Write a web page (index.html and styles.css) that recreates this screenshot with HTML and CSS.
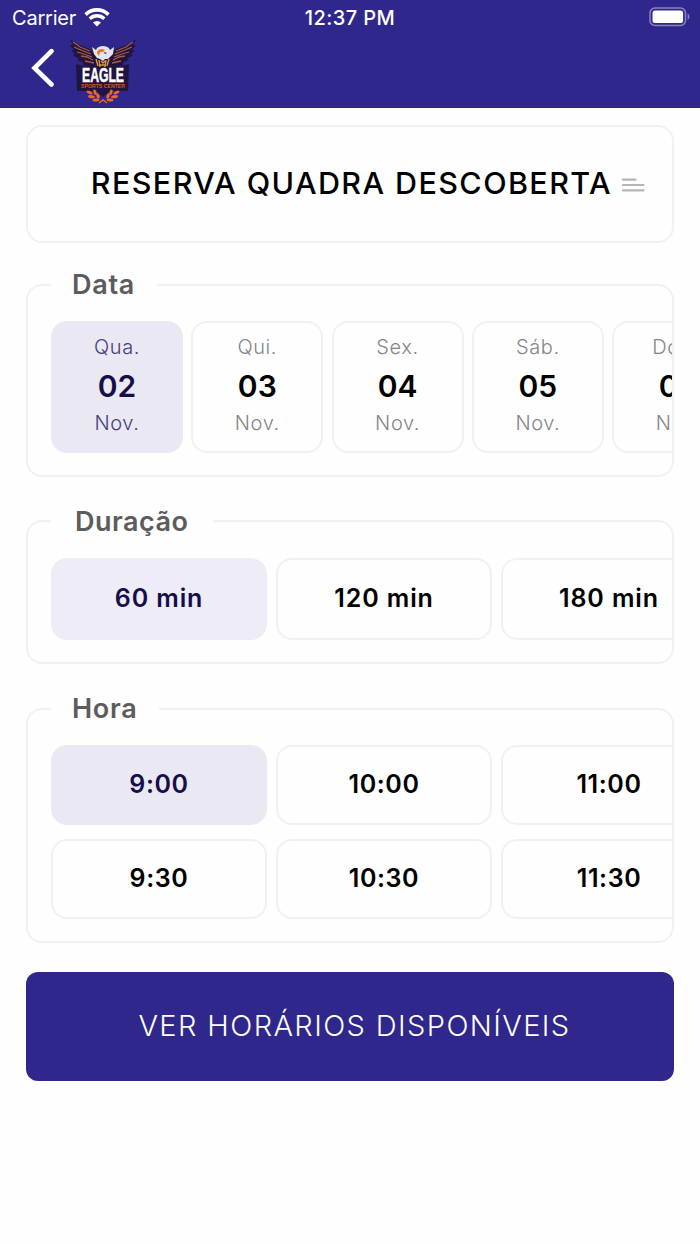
FILE: index.html
```html
<!DOCTYPE html>
<html lang="pt-BR">
<head>
  <meta charset="utf-8">
  <title>Reserva Quadra Descoberta</title>
  <link rel="stylesheet" href="styles.css">
</head>
<body>
  <header class="header">
    <div class="status-bar">
      <div class="status-left">
        <span class="carrier">Carrier</span>
        <svg class="wifi" width="26" height="19" viewBox="0 0 26 19">
          <path d="M1.6 6.6a16.2 16.2 0 0 1 22.8 0" fill="none" stroke="#fff" stroke-width="3.6"/>
          <path d="M5.7 10.8a10.4 10.4 0 0 1 14.6 0" fill="none" stroke="#fff" stroke-width="3.4"/>
          <path d="M13 18.6l-4-4.1a5.8 5.8 0 0 1 8 0z" fill="#fff"/>
        </svg>
      </div>
      <span class="clock">12:37 PM</span>
      <div class="status-right">
        <svg width="42" height="20" viewBox="0 0 42 20">
          <rect x="1" y="1" width="35.5" height="17.4" rx="5" fill="none" stroke="#8983be" stroke-width="1.5"/>
          <rect x="3.5" y="3.4" width="30.6" height="12.6" rx="2.5" fill="#fff"/>
          <path d="M38.6 6.6c2.4 1 2.4 5.3 0 6.3z" fill="#8983be"/>
        </svg>
      </div>
    </div>
    <div class="nav">
      <svg class="back" width="24" height="40" viewBox="0 0 24 40">
        <path d="M20.5 3.2L3.5 20l17 16.5" fill="none" stroke="#fff" stroke-width="4.6" stroke-linecap="round"/>
      </svg>
      <svg class="logo" width="70" height="68" viewBox="0 0 70 68">
        <!-- asas -->
        <path d="M2 1l7 5 13 5 6 6 3 12-9 1-8-4 2-1-7-3 2-1-6-4 2-1-4-4h3L2 7l3 0z" fill="#211440"/>
        <path d="M68 1l-7 5-13 5-6 6-3 12 9 1 8-4-2-1 7-3-2-1 6-4-2-1 4-4h-3l4-5-3 0z" fill="#211440"/>
        <g fill="none" stroke="#a85c3c" stroke-width="1.3">
          <path d="M5 4l7 5 10 4M6 9l7 3 10 4M9 14l7 2 8 3M13 18l6 1 6 3M17 23l9 2"/>
          <path d="M65 4l-7 5-10 4M64 9l-7 3-10 4M61 14l-7 2-8 3M57 18l-6 1-6 3M53 23l-9 2"/>
        </g>
        <!-- corpo -->
        <path d="M26 17l8 5 9-5-1 7-2 7H29l-2-7z" fill="#211440"/>
        <path d="M28 21l2 7M31 22l1 7M38 22l-1 7M41 21l-2 7M33 23l2 2 2-2M32 27h5" fill="none" stroke="#d99a43" stroke-width="1.4"/>
        <!-- cabeça -->
        <path d="M24 9l4 3c1-3 4-4 7-4s6 1 7 4l4-3-1 7-3 3-2 2-3 0-2 2-3-2-3-1-3-4z" fill="#e4e4ec"/>
        <path d="M29 15c0-4 5-5 8-3l-2 2-3 0-1 4z" fill="#ee7421"/>
        <path d="M36 14l3 1-2 1z" fill="#211440"/>
        <!-- faixa -->
        <path d="M8 26l12 3h29l12-3-1 27H42l-7 6-7-6H9z" fill="#211440"/>
        <text class="logo-name" x="14" y="44.3" textLength="42" lengthAdjust="spacingAndGlyphs">EAGLE</text>
        <text class="logo-sub" x="13" y="49.6" textLength="44" lengthAdjust="spacingAndGlyphs">SPORTS CENTER</text>
        <!-- louros -->
        <g fill="#ef6c1a">
          <ellipse cx="21.5" cy="54.5" rx="3.2" ry="1.5" transform="rotate(25 21.5 54.5)"/>
          <ellipse cx="27" cy="54.2" rx="2.8" ry="1.5" transform="rotate(70 27 54.2)"/>
          <ellipse cx="23.5" cy="58.7" rx="3.4" ry="1.5" transform="rotate(8 23.5 58.7)"/>
          <ellipse cx="30" cy="58" rx="2.8" ry="1.5" transform="rotate(65 30 58)"/>
          <ellipse cx="28" cy="62" rx="3.4" ry="1.5" transform="rotate(-5 28 62)"/>
          <ellipse cx="48.5" cy="54.5" rx="3.2" ry="1.5" transform="rotate(-25 48.5 54.5)"/>
          <ellipse cx="43" cy="54.2" rx="2.8" ry="1.5" transform="rotate(-70 43 54.2)"/>
          <ellipse cx="46.5" cy="58.7" rx="3.4" ry="1.5" transform="rotate(-8 46.5 58.7)"/>
          <ellipse cx="40" cy="58" rx="2.8" ry="1.5" transform="rotate(-65 40 58)"/>
          <ellipse cx="42" cy="62" rx="3.4" ry="1.5" transform="rotate(5 42 62)"/>
        </g>
        <path d="M31 65l4-3 4 3" fill="none" stroke="#ef6c1a" stroke-width="1.5"/>
      </svg>
    </div>
  </header>

  <main class="content">
    <div class="title-card">
      <h1 class="title">RESERVA QUADRA DESCOBERTA</h1>
      <svg class="lines" width="24" height="16" viewBox="0 0 24 16">
        <path d="M2 2.7H14.5M2 8H22.5M2 13.3H22.5" stroke="#b5b5b5" stroke-width="2.2" stroke-linecap="round"/>
      </svg>
    </div>

    <section class="group group-date">
      <h2 class="legend">Data</h2>
      <div class="scroller">
        <div class="day selected">
          <span class="week">Qua.</span>
          <span class="number">02</span>
          <span class="month">Nov.</span>
        </div>
        <div class="day">
          <span class="week">Qui.</span>
          <span class="number">03</span>
          <span class="month">Nov.</span>
        </div>
        <div class="day">
          <span class="week">Sex.</span>
          <span class="number">04</span>
          <span class="month">Nov.</span>
        </div>
        <div class="day">
          <span class="week">Sáb.</span>
          <span class="number">05</span>
          <span class="month">Nov.</span>
        </div>
        <div class="day">
          <span class="week">Dom.</span>
          <span class="number">06</span>
          <span class="month">Nov.</span>
        </div>
      </div>
    </section>

    <section class="group group-duration">
      <h2 class="legend">Duração</h2>
      <div class="scroller">
        <div class="option selected">60 min</div>
        <div class="option">120 min</div>
        <div class="option">180 min</div>
      </div>
    </section>

    <section class="group group-hour">
      <h2 class="legend">Hora</h2>
      <div class="scroller">
        <div class="option selected">9:00</div>
        <div class="option">10:00</div>
        <div class="option">11:00</div>
      </div>
      <div class="scroller">
        <div class="option">9:30</div>
        <div class="option">10:30</div>
        <div class="option">11:30</div>
      </div>
    </section>

    <button class="submit">VER HORÁRIOS DISPONÍVEIS</button>
  </main>
</body>
</html>
```
FILE: styles.css
```css
* {
  box-sizing: border-box;
}
body {
  margin: 0;
  height: 1244px;
  overflow: hidden;
  background-color: #fefefe;
  font-family: Inter, "Liberation Sans", sans-serif;
  color: #000;
}
.header {
  height: 108px;
  background-color: #30278c;
  border-bottom: 1px solid #2a2180;
  color: #fff;
}
.status-bar {
  display: grid;
  grid-template-columns: 1fr auto 1fr;
  align-items: center;
  height: 36px;
  padding: 0 9px 0 12px;
}
.status-left {
  display: flex;
  align-items: center;
  gap: 8px;
}
.carrier {
  font-size: 20px;
  letter-spacing: -0.2px;
}
.wifi {
  margin-top: -2px;
}
.clock {
  font-size: 20px;
  font-weight: 500;
  letter-spacing: 0.4px;
  margin-left: -3px;
}
.status-right {
  display: flex;
  justify-content: flex-end;
  margin-top: -2px;
}
.nav {
  display: flex;
  align-items: flex-start;
  padding: 2px 0 0 31px;
}
.back {
  margin: 10px 13px 0 0;
}
.logo-name {
  font-family: "Liberation Sans", sans-serif;
  font-size: 20px;
  font-weight: 700;
  fill: #fff;
  stroke: #fff;
  stroke-width: 0.5px;
}
.logo-sub {
  font-family: "Liberation Sans", sans-serif;
  font-size: 5px;
  font-weight: 700;
  fill: #c95f2c;
}

.content {
  padding: 17px 26px 0;
}
.title-card {
  display: flex;
  justify-content: flex-end;
  align-items: center;
  height: 118px;
  padding: 0 27px 2px 0;
  border: 2px solid #f1f1f1;
  border-radius: 16px;
}
.title {
  margin: 0 9px 0 0;
  font-size: 30.5px;
  font-weight: 550;
  line-height: 36px;
  letter-spacing: 1.4px;
  white-space: nowrap;
}
.lines {
  margin-top: 4px;
}

/* caixas com o título sobre a borda */
.group {
  border: 2px solid #f1f1f1;
  border-radius: 16px;
}
.group-date {
  height: 193px;
  margin-top: 41px;
}
.group-duration {
  height: 144px;
  margin-top: 43px;
}
.group-hour {
  height: 235px;
  margin-top: 44px;
}
.legend {
  width: 106px;
  height: 48px;
  margin: -24px 0 0 23px;
  padding-left: 21px;
  background-color: #fefefe;
  color: #5c5c5c;
  font-size: 27px;
  font-weight: 600;
  line-height: 46px;
  letter-spacing: 0.7px;
}
.group-duration .legend {
  width: 162px;
  padding-left: 24px;
  line-height: 48px;
  letter-spacing: 0.5px;
}
.group-hour .legend {
  width: 108px;
}
.scroller {
  display: flex;
  gap: 9px;
  margin-top: 11px;
  padding-left: 23px;
  overflow: hidden;
}
.group-date .scroller {
  gap: 8.3px;
}
.group-duration .scroller {
  margin-top: 12px;
}
.group-hour .scroller + .scroller {
  margin-top: 14px;
}
.day {
  display: flex;
  flex: none;
  flex-direction: column;
  align-items: center;
  width: 132px;
  height: 132px;
  padding-top: 12px;
  border: 2px solid #f1f1f1;
  border-radius: 16px;
}
.week,
.month {
  color: #858585;
  font-size: 20px;
  font-weight: 300;
  line-height: 24px;
  letter-spacing: 0.6px;
}
.number {
  margin: 8px 0 6px;
  font-size: 30px;
  font-weight: 600;
  line-height: 38px;
}
.option {
  display: flex;
  flex: none;
  justify-content: center;
  align-items: center;
  width: 216px;
  height: 82px;
  padding-bottom: 2px;
  border: 2px solid #f1f1f1;
  border-radius: 16px;
  font-size: 25px;
  font-weight: 600;
  letter-spacing: 0.6px;
}
.group-duration .option {
  letter-spacing: 0.9px;
}
.group-hour .option {
  height: 80px;
}
.selected {
  border-color: #eae8f3;
  background-color: #eae8f3;
  color: #160e4b;
}
.selected .week,
.selected .month {
  color: #453d7d;
}
.group-duration .selected {
  border-color: #eeecf6;
  background-color: #eeecf6;
}
.submit {
  display: block;
  width: 100%;
  height: 109px;
  margin-top: 29px;
  padding: 0 0 2px 9px;
  border: 0;
  border-radius: 12px;
  background-color: #30278c;
  color: #fff;
  font-family: inherit;
  font-size: 29px;
  font-weight: 300;
  letter-spacing: 1.4px;
}
```
